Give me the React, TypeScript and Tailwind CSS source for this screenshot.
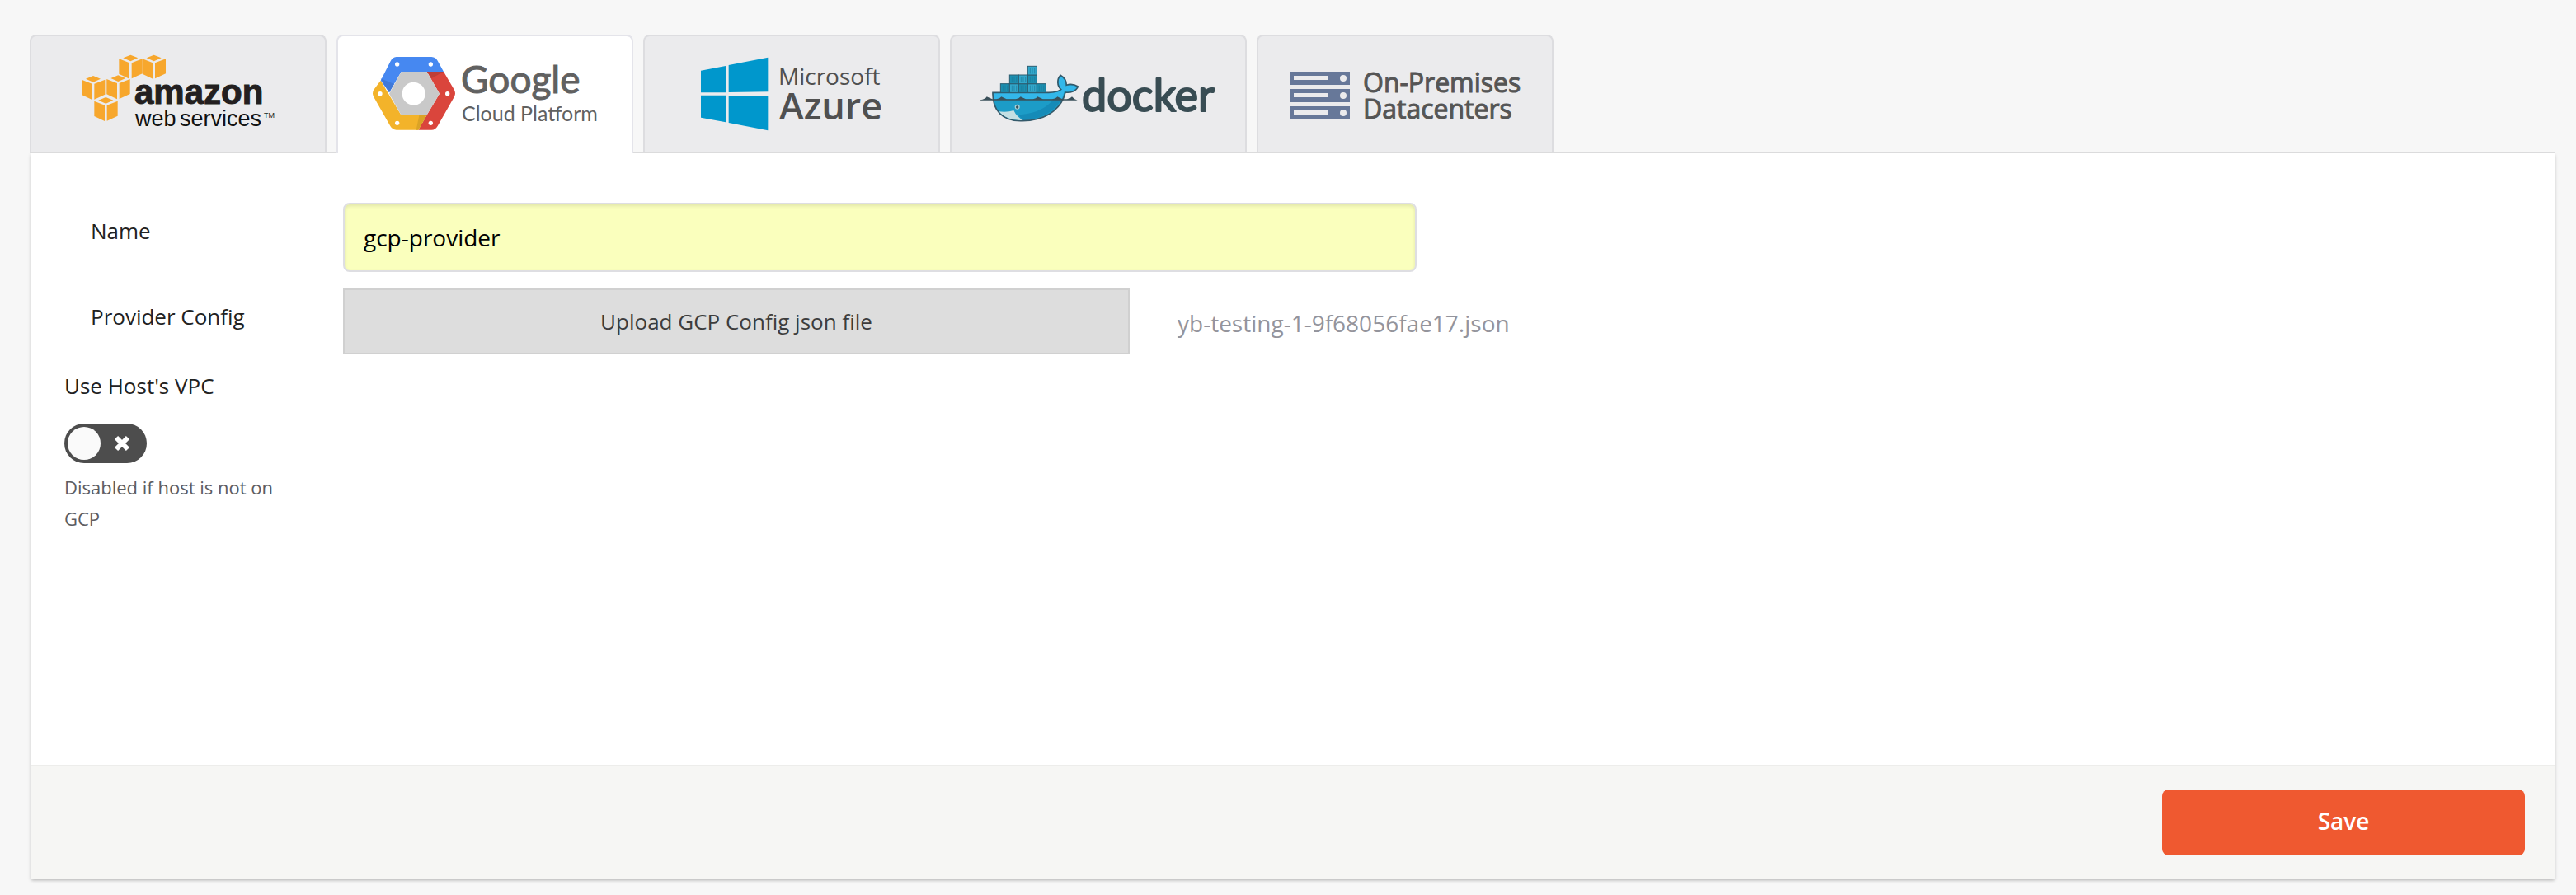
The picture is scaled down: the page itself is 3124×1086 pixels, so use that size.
import { useState, type ReactNode } from "react";

const ORANGE = "#f7a72d";

function Cube({ x, y }: { x: number; y: number }) {
  return (
    <g transform={`translate(${x} ${y})`} fill={ORANGE}>
      <path d="M42 0 L69 11 L42 23 L15 11 Z" />
      <path d="M0 14 L38 29 L38 87 L0 69 Z" />
      <path d="M46 29 L85 14 L85 68 L46 86 Z" />
    </g>
  );
}

function AwsLogo() {
  return (
    <svg viewBox="0 0 356 140" className="h-[140px] w-[356px]">
      <g transform="scale(0.33333) translate(-54 -42)">
        <Cube x={373} y={110} />
        <Cube x={458} y={110} />
        <Cube x={237} y={186} />
        <Cube x={328} y={184} />
        <Cube x={283} y={264} />
      </g>
      <g fontFamily="'Liberation Sans',sans-serif">
        <text x="125" y="82" fontSize="42" fontWeight="700" fill="#231f20" stroke="#231f20" strokeWidth="1">amazon</text>
        <text x="126" y="109" fontSize="27" fill="#111">web</text>
        <text x="180" y="109" fontSize="27" fill="#111">services</text>
        <text x="282" y="99" fontSize="9" fill="#231f20">TM</text>
      </g>
    </svg>
  );
}

function GoogleLogo() {
  return (
    <svg viewBox="0 0 356 140" className="h-[140px] w-[356px]">
      <g transform="scale(0.33333) translate(-30 -42)">
        <path d="M242 117 H370 Q385 118 392 131 L414 171 H260 L216 247 L185 203 L220 134 Q228 118 242 117Z" fill="#4688f1" />
        <path d="M414 171 L453 238 Q459 250 453 262 L392 369 Q384 383 370 383 H322 L352 330 L399 251 L353 171Z" fill="#da453c" />
        <path d="M185 203 L260 330 H352 L322 383 H242 Q228 382 220 369 L159 262 Q153 250 159 238Z" fill="#f3b32a" />
        <path d="M353 171 H414 L370 195Z" fill="#be3e36" />
        <path d="M185 196 L234 216 L216 247Z" fill="#4079d8" />
        <path d="M325 330 H352 L322 383 H314Z" fill="#dba326" />
        <path d="M260 171 H353 L399 251 L352 330 H260 L216 251Z" fill="#c9c9c9" />
        <circle cx="305" cy="251" r="42" fill="#fff" />
        <g fill="#fff">
          <circle cx="245" cy="144" r="8" />
          <circle cx="367" cy="144" r="8" />
          <circle cx="183" cy="251" r="8" />
          <circle cx="428" cy="251" r="8" />
          <circle cx="245" cy="358" r="8" />
          <circle cx="367" cy="358" r="8" />
        </g>
      </g>
      <g fontFamily="Lato,sans-serif" fill="#616161">
        <text x="149" y="69" fontSize="46" stroke="#616161" strokeWidth="1">Google</text>
        <text x="150" y="103" fontSize="25">Cloud Platform</text>
      </g>
    </svg>
  );
}

function AzureLogo() {
  return (
    <svg viewBox="0 0 356 140" className="h-[140px] w-[356px]">
      <g transform="scale(0.33333) translate(-36 -42)" fill="#0097cc">
        <path d="M240 167 L330 150 V247 H240Z" />
        <path d="M341 147 L484 119 V244 L341 246Z" />
        <path d="M240 257 H330 V355 L240 338Z" />
        <path d="M341 258 L484 260 V385 L341 357Z" />
      </g>
      <g fontFamily="'Open Sans','Noto Sans',sans-serif" fill="#505050">
        <text x="162" y="59" fontSize="28">Microsoft</text>
        <text x="163" y="101" fontSize="45" fontWeight="600">Azure</text>
      </g>
    </svg>
  );
}

function Container({ x, y, fill }: { x: number; y: number; fill: string }) {
  return (
    <g>
      <rect x={x} y={y} width="33" height="32" fill={fill} stroke="#2c5d70" strokeWidth="3" />
      <path d={`M${x + 9} ${y + 6}v21M${x + 17} ${y + 6}v21M${x + 25} ${y + 6}v21`} stroke="#1b7a99" strokeWidth="2" />
    </g>
  );
}

function DockerLogo() {
  return (
    <svg viewBox="0 0 356 140" className="h-[140px] w-[356px]">
      <g transform="scale(0.33333) translate(-42 -42)">
        <path
          d="M192 247 H395 Q425 247 440 236 C425 222 425 198 438 184 C452 192 460 206 460 220 C472 216 490 218 502 225 C496 242 474 249 456 246 C446 290 405 348 300 350 C225 353 190 310 192 247Z"
          fill="#1c9cc7"
        />
        <path d="M440 272 C420 312 370 345 302 348 Q290 335 285 328 C350 325 390 300 410 274Z" fill="#158bb8" />
        <path
          d="M194 249 H395 Q430 247 443 236 C427 222 428 198 438 187 C450 195 458 208 457 223 C470 218 488 220 499 227 C490 241 470 246 452 243 L444 270 H194Z"
          fill="#33b7ea"
        />
        <path d="M213 316 Q245 320 268 312 Q278 334 302 348 Q245 352 213 316Z" fill="#c3dfe3" />
        <path
          d="M192 247 H395 Q425 247 440 236 C425 222 425 198 438 184 C452 192 460 206 460 220 C472 216 490 218 502 225 C496 242 474 249 456 246 C446 290 405 348 300 350 C225 353 190 310 192 247Z"
          fill="none"
          stroke="#34596a"
          strokeWidth="5"
        />
        <path
          d="M146 274 Q165 271 170 262 L190 271 H205 Q218 269 223 262 L242 271 H275 Q288 269 293 262 L312 271 H338 Q350 269 355 262 L374 271 H408 Q422 269 427 262 L445 271 H462 Q474 269 480 262 Q487 272 500 275 H146Z"
          fill="#3a505a"
        />
        <Container x={220} y={215} fill="#1c8fb0" />
        <Container x={253} y={215} fill="#33a8cc" />
        <Container x={286} y={215} fill="#1c8fb0" />
        <Container x={319} y={215} fill="#33a8cc" />
        <Container x={352} y={215} fill="#1c8fb0" />
        <Container x={253} y={183} fill="#1c8fb0" />
        <Container x={286} y={183} fill="#33a8cc" />
        <Container x={319} y={183} fill="#1c8fb0" />
        <Container x={319} y={151} fill="#33a8cc" />
        <circle cx="281" cy="299" r="9" fill="#a5cfd6" />
        <circle cx="281" cy="300" r="5" fill="#34515d" />
      </g>
      <text
        x="158"
        y="91"
        fontFamily="Lato,sans-serif"
        fontSize="54"
        fill="#394d54"
        stroke="#394d54"
        strokeWidth="2"
        strokeLinejoin="round"
        strokeLinecap="round"
      >
        docker
      </text>
    </svg>
  );
}

function OnPremLogo() {
  return (
    <span className="flex w-full items-center gap-4 pt-1 pl-[38px]">
      <svg viewBox="0 0 73 58" className="h-[58px] w-[73px]" aria-hidden="true">
        {[0, 21, 42].map((y) => (
          <g key={y}>
            <rect x="0" y={y} width="73" height="16" fill="#677899" />
            <rect x="5" y={y + 5} width="42" height="5" fill="#ebebed" />
            <circle cx="65" cy={y + 8} r="4" fill="#ebebed" />
          </g>
        ))}
      </svg>
      <span className="text-left text-[32px] leading-8 text-[#555] [-webkit-text-stroke:1px_#555]">
        On-Premises
        <br />
        Datacenters
      </span>
    </span>
  );
}

const tabs: { id: string; logo: ReactNode }[] = [
  { id: "aws", logo: <AwsLogo /> },
  { id: "gcp", logo: <GoogleLogo /> },
  { id: "azure", logo: <AzureLogo /> },
  { id: "docker", logo: <DockerLogo /> },
  { id: "onprem", logo: <OnPremLogo /> },
];

export default function App() {
  const [active, setActive] = useState("gcp");
  const [name, setName] = useState("gcp-provider");
  const [useHost, setUseHost] = useState(false);

  return (
    <main className="min-h-screen bg-[#f7f7f7] pt-[42px] pr-[26px] pb-5 pl-9 font-['Open_Sans','Noto_Sans',sans-serif] text-[#222]">
      <div role="tablist" className="relative flex gap-3 border-b-2 border-[#dbdbdc]">
        {tabs.map((t) => (
          <button
            key={t.id}
            type="button"
            role="tab"
            aria-selected={t.id === active}
            onClick={() => setActive(t.id)}
            className={
              t.id === active
                ? "-mb-0.5 flex h-36 w-[360px] items-center rounded-t-lg border-2 border-b-0 border-[#e4e4ea] bg-white pb-0.5"
                : "flex h-[142px] w-[360px] items-center rounded-t-lg border-2 border-b-0 border-[#dddde0] bg-[#ebebed]"
            }
          >
            {t.logo}
          </button>
        ))}
      </div>

      <form
        onSubmit={(e) => e.preventDefault()}
        className="ml-0.5 bg-white shadow-[0_2px_4px_rgba(0,0,0,0.3)] [clip-path:inset(0_-10px_-10px_-10px)]"
      >
        <div className="min-h-[742px] px-10 pt-[60px]">
          <div className="flex items-start pl-8">
            <label htmlFor="name" className="w-[306px] shrink-0 pt-4 text-[26px] leading-9">
              Name
            </label>
            <input
              id="name"
              type="text"
              value={name}
              onChange={(e) => setName(e.target.value)}
              className="h-[84px] w-full max-w-[1302px] rounded-lg border-2 border-[#dedee2] bg-[#faffbd] px-[23px] text-[28px] text-black shadow-[inset_0_2px_4px_rgba(0,0,0,0.1)]"
            />
          </div>

          <div className="mt-5 flex items-start pl-8">
            <span id="config-label" className="w-[306px] shrink-0 pt-4 text-[26px] leading-9">
              Provider Config
            </span>
            <button
              type="button"
              aria-describedby="config-label"
              className="h-20 w-full max-w-[954px] border-2 border-[#d0d0d0] bg-[#ddd] text-[26px] text-[#3c3c3c]"
            >
              Upload GCP Config json file
            </button>
            <span className="ml-[58px] pt-6 text-[28px] leading-9 text-[#94949c]">yb-testing-1-9f68056fae17.json</span>
          </div>

          <div className="mt-5 w-[266px]">
            <label htmlFor="vpc" className="block text-[26px] leading-9">
              Use Host's VPC
            </label>
            <label className="relative mt-7 block h-12 w-[100px] cursor-pointer rounded-full bg-[#4d4d4d]">
              <input
                id="vpc"
                type="checkbox"
                role="switch"
                checked={useHost}
                onChange={(e) => setUseHost(e.target.checked)}
                className="peer sr-only"
              />
              <span className="absolute top-1 left-1 size-10 rounded-full bg-[#fafafa] peer-checked:left-14" />
              <svg viewBox="0 0 20 20" className="absolute top-3.5 left-[60px] size-5" aria-hidden="true">
                <path d="M3 3 L17 17 M17 3 L3 17" stroke="#fff" strokeWidth="6" />
              </svg>
            </label>
            <p className="mt-2.5 text-[22px] leading-[38px] text-[#5c5c62]">Disabled if host is not on GCP</p>
          </div>
        </div>

        <div className="flex justify-end border-t-2 border-[#ededeb] bg-[#f6f6f4] pt-7 pr-9 pb-7">
          <button
            type="submit"
            className="h-20 w-[440px] rounded-lg bg-[#ef5930] pb-1 text-[28px] font-semibold text-white"
          >
            Save
          </button>
        </div>
      </form>
    </main>
  );
}
